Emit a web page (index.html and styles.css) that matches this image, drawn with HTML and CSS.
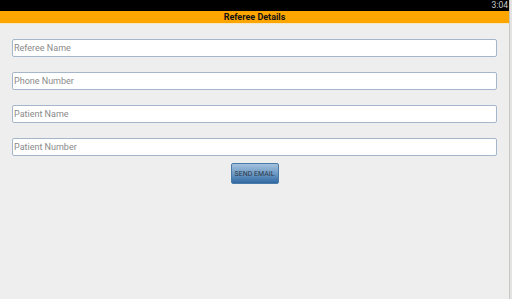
FILE: index.html
```html
<!DOCTYPE html>
<html lang="en">
<head>
    <meta charset="UTF-8" />
    <meta name="viewport" content="width=device-width, initial-scale=1.0" />
    <title>Referee Details</title>
    <link rel="stylesheet" href="styles.css">
</head>
<body>
    <div class="screen">
        <div class="main">
            <div class="status-bar">
                <span class="clock">3:04</span>
            </div>
            <div class="title-bar">Referee Details</div>
            <form class="form" id="refereeForm">
                <input type="text" class="field" placeholder="Referee Name" />
                <input type="text" class="field" placeholder="Phone Number" />
                <input type="text" class="field" placeholder="Patient Name" />
                <input type="text" class="field" placeholder="Patient Number" />
                <button type="button" class="send-btn">SEND EMAIL</button>
            </form>
        </div>
        <div class="edge"></div>
    </div>
</body>
</html>
```

FILE: styles.css
```css
html, body {
    margin: 0;
    height: 100%;
}
body {
    font-family: Roboto, "Liberation Sans", sans-serif;
    background-color: #eeeeee;
}
.screen {
    display: flex;
    height: 299px;
}
.main {
    flex: 1;
    display: flex;
    flex-direction: column;
}
.edge {
    width: 3px;
    background-color: #e4e4e4;
    border-left: 1px solid #c4c8c0;
    box-sizing: border-box;
}
.status-bar {
    height: 11px;
    background-color: #000;
    display: flex;
    justify-content: flex-end;
    align-items: center;
    padding-right: 1px;
}
.clock {
    color: #c8c8c8;
    font-size: 8.5px;
    line-height: 11px;
}
.title-bar {
    height: 12px;
    background-color: #ffa500;
    border-bottom: 1px solid #f7e6c4;
    color: #111;
    font-size: 9px;
    font-weight: bold;
    line-height: 12px;
    text-align: center;
}
.form {
    display: flex;
    flex-direction: column;
    gap: 15px;
    padding: 15px 12px 0 12px;
}
.field {
    height: 18px;
    box-sizing: border-box;
    border: 1px solid #a6b6ca;
    border-radius: 2px;
    background-color: #fff;
    padding: 0 1px;
    font-family: Roboto, "Liberation Sans", sans-serif;
    font-size: 9px;
    color: #333;
    outline: none;
}
.field::placeholder {
    color: #8a8a8a;
}
.send-btn {
    align-self: center;
    margin-top: -8px;
    width: 48px;
    height: 21px;
    border: 1px solid #4a7aa8;
    border-radius: 2px;
    background: linear-gradient(#a4c2de, #6f9ac4 50%, #2f69a3);
    color: #2c3a4a;
    font-family: Roboto, "Liberation Sans", sans-serif;
    font-size: 7px;
    padding: 0;
    cursor: pointer;
}
```
